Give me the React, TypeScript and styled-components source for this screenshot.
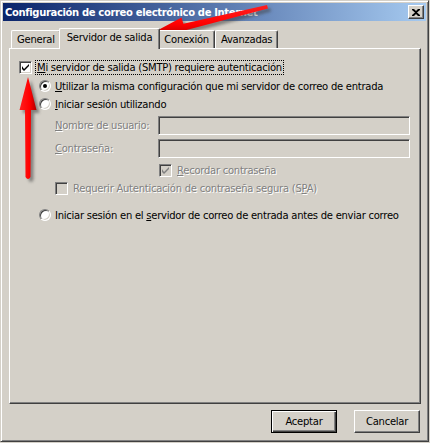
import React from 'react';
import styled, { createGlobalStyle, css } from 'styled-components';

const FONT = `"DejaVu Sans", "Liberation Sans", sans-serif`;

const Global = createGlobalStyle`
  html, body { margin: 0; padding: 0; background: #D4D0C8; }
  body {
    width: 430px; height: 443px; overflow: hidden;
    font-family: ${FONT}; font-size: 10px; color: #000;
    letter-spacing: -0.25px;
  }
  * { box-sizing: border-box; }
`;

const Page = styled.div`
  position: relative;
  width: 430px;
  height: 443px;
`;

const Window = styled.div`
  width: 429px;
  height: 442px;
  background: #D4D0C8;
  border: 1px solid;
  border-color: #D4D0C8 #404040 #404040 #D4D0C8;
  box-shadow: inset 1px 1px #fff, inset -1px -1px #808080;
  padding: 2px;
  display: flex;
  flex-direction: column;
`;

const TitleBar = styled.div`
  height: 18px;
  display: flex;
  align-items: center;
  justify-content: space-between;
  padding: 0 2px 0 2px;
  background: linear-gradient(to right, #0A246A, #A6CAF0);
`;

const TitleText = styled.span`
  color: #fff;
  font-weight: bold;
  font-size: 10px;
  letter-spacing: -0.35px;
  white-space: nowrap;
`;

const CloseButton = styled.div`
  width: 16px;
  height: 14px;
  background: #D4D0C8;
  border: 1px solid;
  border-color: #fff #404040 #404040 #fff;
  box-shadow: inset -1px -1px #808080;
  display: flex;
  align-items: center;
  justify-content: center;
`;

const Body = styled.div`
  flex: 1;
  display: flex;
  flex-direction: column;
  padding: 7px 5px 0 6px;
`;

const TabStrip = styled.div`
  display: flex;
  align-items: flex-end;
  height: 20px;
  padding-left: 2px;
  position: relative;
  z-index: 1;
`;

const Tab = styled.div<{ $active?: boolean }>`
  height: 18px;
  padding: 0 5px;
  display: flex;
  align-items: center;
  white-space: nowrap;
  background: #D4D0C8;
  border-top: 1px solid #fff;
  border-left: 1px solid #fff;
  border-right: 1px solid #404040;
  border-top-left-radius: 2px;
  border-top-right-radius: 2px;
  box-shadow: inset -1px 0 #808080;
  ${(p) =>
    p.$active &&
    css`
      height: 21px;
      margin: 0 -2px -1px -2px;
      padding: 0 7px 3px 7px;
      position: relative;
      z-index: 2;
    `}
`;

const Panel = styled.div`
  height: 356px;
  border: 1px solid;
  border-color: #fff #404040 #404040 #fff;
  box-shadow: inset -1px -1px #808080;
  padding: 8px 0 0 9px;
  display: flex;
  flex-direction: column;
`;

const Row = styled.div<{ $indent?: number; $h?: number; $mt?: number }>`
  display: flex;
  align-items: center;
  height: ${(p) => p.$h ?? 18}px;
  margin-top: ${(p) => p.$mt ?? 0}px;
  padding-left: ${(p) => p.$indent ?? 0}px;
  white-space: nowrap;
`;

const CheckBox = styled.div<{ $disabled?: boolean }>`
  width: 13px;
  height: 13px;
  flex: none;
  background: ${(p) => (p.$disabled ? '#D4D0C8' : '#fff')};
  border: 1px solid;
  border-color: #808080 #fff #fff #808080;
  box-shadow: inset 1px 1px #404040, inset -1px -1px #D4D0C8;
  display: flex;
  align-items: center;
  justify-content: center;
`;

const Radio = styled.div<{ $checked?: boolean }>`
  width: 12px;
  height: 12px;
  flex: none;
  border-radius: 50%;
  background: #fff;
  border: 1px solid;
  border-color: #808080 #fff #fff #808080;
  box-shadow: inset 1px 1px #404040, inset -1px -1px #D4D0C8;
  display: flex;
  align-items: center;
  justify-content: center;
  &::after {
    content: '';
    width: 4px;
    height: 4px;
    border-radius: 50%;
    background: ${(p) => (p.$checked ? '#000' : 'transparent')};
  }
`;

const Label = styled.span<{ $disabled?: boolean; $gap?: number }>`
  margin-left: ${(p) => p.$gap ?? 4}px;
  ${(p) =>
    p.$disabled &&
    css`
      color: #808080;
      text-shadow: 1px 1px #fff;
    `}
  u { text-decoration: underline; text-underline-offset: 1px; }
`;

const FocusLabel = styled.span`
  margin-left: 3px;
  padding: 1px 1px 1px 1px;
  border: 1px dotted #000;
  u { text-decoration: underline; text-underline-offset: 1px; }
`;

const FieldLabel = styled.span`
  width: 103px;
  color: #808080;
  text-shadow: 1px 1px #fff;
  u { text-decoration: underline; text-underline-offset: 1px; }
`;

const Input = styled.div`
  width: 252px;
  height: 19px;
  background: #D4D0C8;
  border: 1px solid;
  border-color: #808080 #fff #fff #808080;
  box-shadow: inset 1px 1px #404040, inset -1px -1px #D4D0C8;
`;

const Footer = styled.div`
  display: flex;
  justify-content: flex-end;
  gap: 17px;
  padding: 6px 1px 0 0;
`;

const Button = styled.div<{ $default?: boolean }>`
  width: 66px;
  height: 23px;
  display: flex;
  align-items: center;
  justify-content: center;
  background: #D4D0C8;
  border: 1px solid;
  border-color: #fff #404040 #404040 #fff;
  box-shadow: inset -1px -1px #808080;
  ${(p) =>
    p.$default &&
    css`
      border: 1px solid #000;
      box-shadow: inset 1px 1px #fff, inset -1px -1px #404040, inset -2px -2px #808080;
    `}
`;

const Overlay = styled.svg`
  position: absolute;
  left: 0;
  top: 0;
  width: 430px;
  height: 443px;
  pointer-events: none;
`;

const Check = ({ color = '#000' }: { color?: string }) => (
  <svg width="7" height="7" viewBox="0 0 7 7">
    <path d="M0 2 L0 5 L2 7 L7 2 L7 0 L2 5 Z" fill={color} />
  </svg>
);

export default function App() {
  return (
    <Page>
      <Global />
      <Window>
        <TitleBar>
          <TitleText>Configuración de correo electrónico de Internet</TitleText>
          <CloseButton>
            <svg width="8" height="7" viewBox="0 0 8 7">
              <path d="M0 0h2l2 2 2-2h2v1L5 3.5 8 6v1H6L4 5 2 7H0V6l3-2.5L0 1z" fill="#000" />
            </svg>
          </CloseButton>
        </TitleBar>
        <Body>
          <TabStrip>
            <Tab>General</Tab>
            <Tab $active>Servidor de salida</Tab>
            <Tab>Conexión</Tab>
            <Tab>Avanzadas</Tab>
          </TabStrip>
          <Panel>
            <Row $mt={1}>
              <CheckBox>
                <Check />
              </CheckBox>
              <FocusLabel>
                <u>M</u>i servidor de salida (SMTP) requiere autenticación
              </FocusLabel>
            </Row>
            <Row $indent={20} $mt={1}>
              <Radio $checked />
              <Label>
                <u>U</u>tilizar la misma configuración que mi servidor de correo de entrada
              </Label>
            </Row>
            <Row $indent={20}>
              <Radio />
              <Label>
                <u>I</u>niciar sesión utilizando
              </Label>
            </Row>
            <Row $indent={36} $h={19} $mt={3}>
              <FieldLabel>
                <u>N</u>ombre de usuario:
              </FieldLabel>
              <Input />
            </Row>
            <Row $indent={36} $h={19} $mt={4}>
              <FieldLabel>
                <u>C</u>ontraseña:
              </FieldLabel>
              <Input />
            </Row>
            <Row $indent={140} $h={16} $mt={4}>
              <CheckBox $disabled>
                <Check color="#808080" />
              </CheckBox>
              <Label $disabled $gap={5}>
                <u>R</u>ecordar contraseña
              </Label>
            </Row>
            <Row $indent={36} $h={16} $mt={2}>
              <CheckBox $disabled />
              <Label $disabled $gap={5}>
                Requerir Autenticación de contraseña segura (S<u>P</u>A)
              </Label>
            </Row>
            <Row $indent={20} $mt={10}>
              <Radio />
              <Label>
                Iniciar sesión en el <u>s</u>ervidor de correo de entrada antes de enviar correo
              </Label>
            </Row>
          </Panel>
          <Footer>
            <Button $default>Aceptar</Button>
            <Button>Cancelar</Button>
          </Footer>
        </Body>
      </Window>
      <Overlay viewBox="0 0 430 443">
        <defs>
          <filter id="sh" x="-20%" y="-20%" width="140%" height="140%">
            <feGaussianBlur stdDeviation="1.6" />
          </filter>
          <linearGradient id="rv" x1="0" y1="0" x2="1" y2="0">
            <stop offset="0" stopColor="#ff2020" />
            <stop offset="0.6" stopColor="#ff0000" />
            <stop offset="1" stopColor="#b00000" />
          </linearGradient>
          <linearGradient id="rh" x1="0" y1="0" x2="0" y2="1">
            <stop offset="0" stopColor="#ff2020" />
            <stop offset="0.6" stopColor="#ff0000" />
            <stop offset="1" stopColor="#b00000" />
          </linearGradient>
        </defs>
        <g opacity="0.55" filter="url(#sh)" transform="translate(3,3)">
          <path d="M147 36 L186.5 37 L184.6 30.5 L268 8.5 L267 5 L183.4 23.8 L181.5 17.5 Z" fill="#404040" />
          <path d="M28 77 L19.5 110 L25 110 L25.5 177 Q28 181 30.5 177 L31 110 L36.5 110 Z" fill="#404040" />
        </g>
        <path d="M147 36 L186.5 37 L184.6 30.5 L268 8.5 L267 5 L183.4 23.8 L181.5 17.5 Z" fill="url(#rh)" />
        <path d="M28 77 L19.5 110 L25 110 L25.5 177 Q28 181 30.5 177 L31 110 L36.5 110 Z" fill="url(#rv)" />
      </Overlay>
    </Page>
  );
}
